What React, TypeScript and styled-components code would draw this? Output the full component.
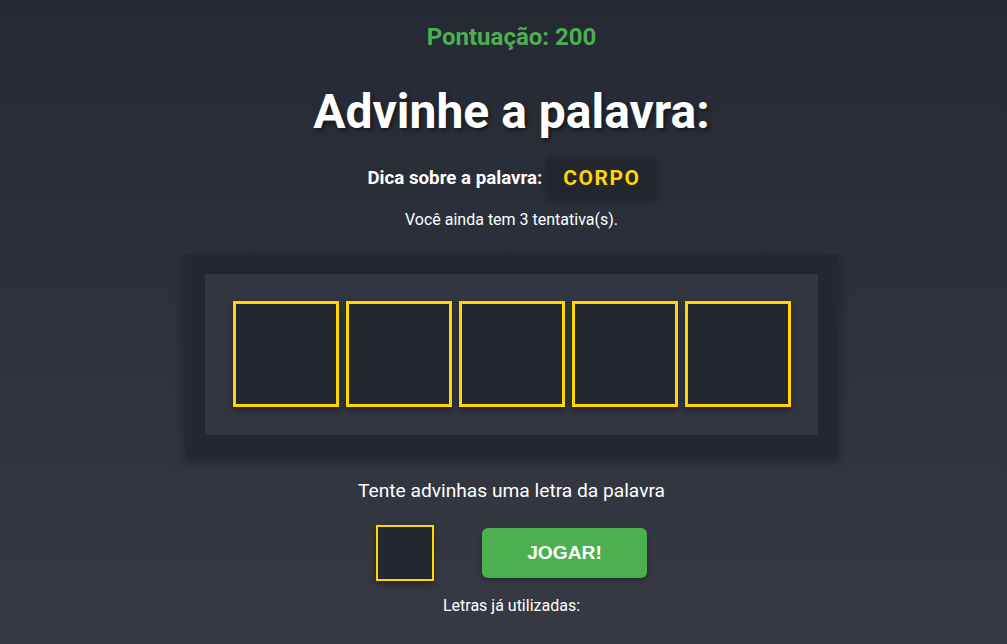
import React from "react";
import styled, { createGlobalStyle } from "styled-components";

const Global = createGlobalStyle`
  html, body { margin: 0; padding: 0; }
  body {
    min-height: 644px;
    background: linear-gradient(to bottom, #242934, #373a43);
    font-family: Roboto, "Noto Sans", sans-serif;
    color: #ffffff;
    overflow: hidden;
  }
`;

const Page = styled.div`
  display: flex;
  flex-direction: column;
  align-items: center;
  min-height: 644px;
  padding: 23px 0 0 16px;
  box-sizing: border-box;
`;

const Score = styled.div`
  font-size: 24px;
  font-weight: 700;
  color: #4caf50;
  line-height: 28px;
`;

const Title = styled.h1`
  margin: 33px 0 0;
  font-size: 48px;
  font-weight: 700;
  line-height: 56px;
  text-shadow: 2px 2px 4px rgba(0, 0, 0, 0.5);
`;

const HintRow = styled.div`
  display: flex;
  align-items: center;
  gap: 5px;
  margin-top: 18px;
`;

const HintLabel = styled.span`
  font-size: 18.72px;
  font-weight: 700;
`;

const HintBox = styled.span`
  display: inline-flex;
  align-items: center;
  justify-content: center;
  height: 40px;
  padding: 0 15px 0 16px;
  background: #22262f;
  border-radius: 4px;
  box-shadow: 0 2px 6px rgba(0, 0, 0, 0.35);
  color: #ffd700;
  font-size: 21px;
  font-weight: 700;
  letter-spacing: 1.5px;
`;

const Attempts = styled.div`
  margin-top: 12px;
  font-size: 16px;
  line-height: 20px;
`;

const Board = styled.div`
  margin-top: 24px;
  padding: 20px 20px 22px;
  background: #222731;
  box-shadow: 0 4px 10px rgba(0, 0, 0, 0.35);
`;

const BoardInner = styled.div`
  display: flex;
  gap: 7px;
  padding: 27px 27px 28px 28px;
  background: #323640;
`;

const Tile = styled.div`
  width: 100px;
  height: 100px;
  border: 3px solid #ffd700;
  background: #222731;
  box-shadow: 0 3px 6px rgba(0, 0, 0, 0.35);
`;

const Prompt = styled.div`
  margin-top: 22px;
  font-size: 19.2px;
  line-height: 24px;
`;

const Controls = styled.div`
  display: flex;
  align-items: center;
  gap: 48px;
  margin-top: 22px;
`;

const LetterInput = styled.div`
  width: 54px;
  height: 52px;
  border: 2px solid #ffd700;
  background: #222731;
  box-shadow: 0 3px 6px rgba(0, 0, 0, 0.35);
`;

const PlayButton = styled.button`
  width: 165px;
  height: 50px;
  border: none;
  border-radius: 6px;
  background: #4caf50;
  color: #ffffff;
  font-family: "Liberation Sans", Arial, sans-serif;
  font-size: 19.2px;
  font-weight: 700;
  box-shadow: 0 2px 5px rgba(0, 0, 0, 0.3);
`;

const Used = styled.div`
  margin-top: 15px;
  font-size: 16px;
  line-height: 20px;
`;

export default function App() {
  return (
    <>
      <Global />
      <Page>
        <Score>Pontuação: 200</Score>
        <Title>Advinhe a palavra:</Title>
        <HintRow>
          <HintLabel>Dica sobre a palavra:</HintLabel>
          <HintBox>CORPO</HintBox>
        </HintRow>
        <Attempts>Você ainda tem 3 tentativa(s).</Attempts>
        <Board>
          <BoardInner>
            {[0, 1, 2, 3, 4].map((i) => (
              <Tile key={i} />
            ))}
          </BoardInner>
        </Board>
        <Prompt>Tente advinhas uma letra da palavra</Prompt>
        <Controls>
          <LetterInput />
          <PlayButton>JOGAR!</PlayButton>
        </Controls>
        <Used>Letras já utilizadas:</Used>
      </Page>
    </>
  );
}
